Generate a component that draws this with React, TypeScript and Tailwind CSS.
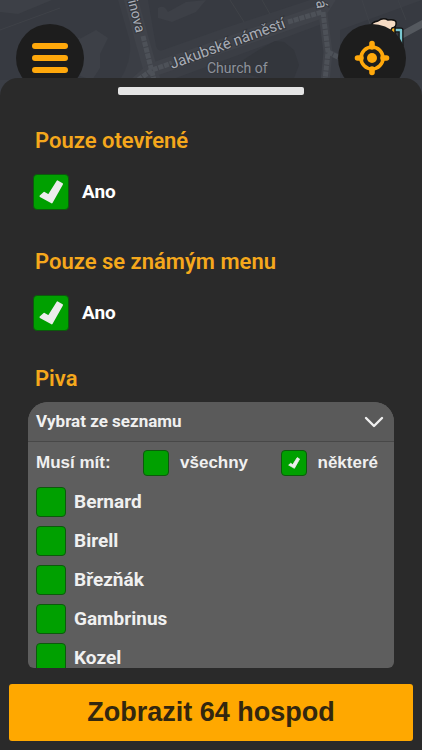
import React, { useState } from 'react';

const beers = ['Bernard', 'Birell', 'Březňák', 'Gambrinus', 'Kozel'];

type TickSize = 'sm' | 'md' | 'lg';

const boxSizes: Record<TickSize, string> = {
  sm: 'size-[26px]',
  md: 'size-[30px]',
  lg: 'size-9',
};

const tickSizes: Record<TickSize, string> = {
  sm: 'size-[18px]',
  md: 'size-[30px]',
  lg: 'size-9',
};

interface TickProps {
  label: string;
  checked: boolean;
  onChange: () => void;
  size: TickSize;
  type?: 'checkbox' | 'radio';
  name?: string;
  className?: string;
}

const Tick: React.FC<TickProps> = ({ label, checked, onChange, size, type = 'checkbox', name, className = '' }) => (
  <label className={`flex w-fit cursor-pointer items-center ${className}`}>
    <span className="grid shrink-0 place-items-center">
      <input
        type={type}
        name={name}
        checked={checked}
        onChange={onChange}
        className={`col-start-1 row-start-1 cursor-pointer appearance-none rounded border border-[#0c5a0c] bg-[#00a000] ${boxSizes[size]}`}
      />
      {checked && (
        <svg viewBox="0 0 36 36" className={`pointer-events-none col-start-1 row-start-1 ${tickSizes[size]}`} aria-hidden="true">
          <path
            d="M7.3 22.2 L11.2 18.6 L15.6 21.2 L24.4 7.2 L29.2 10 L18.8 28.6 Z"
            fill="#ececec"
            stroke="#ececec"
            strokeWidth="1.6"
            strokeLinejoin="round"
          />
        </svg>
      )}
    </span>
    {label}
  </label>
);

const StreetMap: React.FC = () => (
  <svg
    viewBox="0 0 422 112"
    preserveAspectRatio="xMidYMin slice"
    className="absolute inset-x-0 top-0 h-28 w-full bg-[#3b3e45]"
    aria-hidden="true"
  >
    {/* Blocks */}
    <g fill="#373a41">
      <path d="M0 0 H118 L130 42 Q132 60 120 80 H0 Z" />
      <path d="M148 0 H310 L225 28 L163 50 Q158 52 156 46 Z" />
      <path d="M176 78 L322 24 L326 80 Z" />
      <path d="M340 30 L422 0 V80 H340 Z" />
    </g>
    <g fill="#3d4047">
      <path d="M74 42 L96 30 L108 38 L100 54 L100 68 L92 80 L80 76 L84 56 Z" />
      <path d="M158 8 Q164 4 168 12 L186 2 L206 0 L196 12 L172 22 L158 18 Z" />
      <path d="M0 0 L52 0 L18 14 L0 12 Z" />
    </g>
    <path d="M262 48 L275 41 L284 42 L294 50 L299 65 L294 78 L262 78 L246 74 L240 62 Z" fill="#33363c" />
    <g stroke="#3f4248" strokeWidth="1" fill="none">
      <path d="M0 30 L60 8 M20 60 L80 38 M230 0 L244 22 M262 0 L270 14" />
      <path d="M362 0 L370 24 M398 0 L406 20" />
    </g>
    {/* Streets */}
    <g fill="none" stroke="#40434a" strokeLinecap="round" strokeLinejoin="round">
      <path d="M130 -4 L142 40 L154 82" strokeWidth="14" />
      <path d="M136 84 L152 70 L320 12 L330 -4" strokeWidth="14" />
      <path d="M323 14 L328 52 L325 82" strokeWidth="9" />
      <path d="M328 52 L345 60" strokeWidth="6" />
    </g>
    <path d="M400 36 L424 23" stroke="#55595f" strokeWidth="7" />
    <g fill="none" stroke="#4d5158" strokeWidth="5" strokeDasharray="5 1">
      <path d="M143 36 L154 80" />
      <path d="M138 80 L152 70 L172 63" />
      <path d="M288 22 L322 12" />
      <path d="M323 12 L328 52 L325 80" />
      <path d="M328 52 L340 58" />
    </g>
    {/* Street names */}
    <g fontFamily="Roboto, sans-serif" fill="#a9adb6" stroke="#33363c" strokeWidth="2" paintOrder="stroke">
      <text transform="translate(128 1) rotate(76)" fontSize="14">inova</text>
      <text transform="translate(172 69) rotate(-20)" fontSize="15">Jakubské náměstí</text>
      <text transform="translate(316 1) rotate(82)" fontSize="15">á</text>
      <text x="207" y="73" fontSize="14" fill="#8e929b">Church of</text>
    </g>
    {/* Pub marker */}
    <g stroke="#111" strokeLinejoin="round">
      <path d="M395 30 H401 V46" fill="none" strokeWidth="5" />
      <path d="M395 30 H401 V46" fill="none" stroke="#79c7d0" strokeWidth="2.4" />
      <path d="M376 26 H395 V50 H376 Z" fill="#f5b120" strokeWidth="1.5" />
      <path d="M371 27 Q371 22 378 21 Q383 17 388 20 Q395 19 396 22 Q397 27 392 28 L390 32 L371 32 Z" fill="#f6dcc4" strokeWidth="1.5" />
    </g>
  </svg>
);

const MenuIcon: React.FC = () => (
  <svg viewBox="0 0 36 30" className="h-[30px] w-9" fill="none" stroke="#ffa80b" strokeWidth="6" strokeLinecap="round" aria-hidden="true">
    <path d="M3 3 H33 M3 15 H33 M3 27 H33" />
  </svg>
);

const LocateIcon: React.FC = () => (
  <svg viewBox="0 0 36 36" className="size-9" fill="none" stroke="#ffa80b" aria-hidden="true">
    <circle cx="18" cy="18" r="11" strokeWidth="3.6" />
    <circle cx="18" cy="18" r="5" fill="#ffa80b" stroke="none" />
    <path d="M18 3.5 V7 M18 29 V32.5 M3.5 18 H7 M29 18 H32.5" strokeWidth="5.6" strokeLinecap="round" />
  </svg>
);

const App: React.FC = () => {
  const [onlyOpen, setOnlyOpen] = useState(true);
  const [onlyKnownMenu, setOnlyKnownMenu] = useState(true);
  const [listOpen, setListOpen] = useState(true);
  const [match, setMatch] = useState<'all' | 'some'>('some');
  const [selected, setSelected] = useState<string[]>([]);

  const toggleBeer = (beer: string) =>
    setSelected(prev => (prev.includes(beer) ? prev.filter(b => b !== beer) : [...prev, beer]));

  const heading = 'pl-[7px] text-[22px] leading-7 font-semibold text-[#f5a81c]';

  return (
    <div className="relative flex h-screen flex-col overflow-hidden bg-[#2a2a2a] font-['Roboto',sans-serif] text-[#f0f0f0]">
      <StreetMap />

      <header className="relative flex h-[78px] shrink-0 items-start justify-between px-4 pt-6">
        <button aria-label="Menu" className="grid size-[68px] shrink-0 place-items-center rounded-full bg-[#1d1d1d]">
          <MenuIcon />
        </button>
        <button aria-label="Moje poloha" className="grid size-[68px] shrink-0 place-items-center rounded-full bg-[#1d1d1d]">
          <LocateIcon />
        </button>
      </header>

      {/* Filter sheet */}
      <main className="relative flex min-h-0 flex-1 flex-col rounded-t-[18px] bg-[#2a2a2a] pt-[9px] pb-[9px]">
        <button aria-label="Zavřít filtr" className="h-2 w-[186px] shrink-0 self-center rounded-xs bg-[#e4e4e4]" />

        <div className="flex min-h-0 flex-1 flex-col px-7 pt-8">
          <section className="mb-[38px]">
            <h2 className={heading}>Pouze otevřené</h2>
            <Tick
              size="lg"
              label="Ano"
              checked={onlyOpen}
              onChange={() => setOnlyOpen(!onlyOpen)}
              className="mt-[19px] ml-[5px] gap-[13px] text-[19px] leading-7 font-bold text-white"
            />
          </section>

          <section className="mb-[34px]">
            <h2 className={heading}>Pouze se známým menu</h2>
            <Tick
              size="lg"
              label="Ano"
              checked={onlyKnownMenu}
              onChange={() => setOnlyKnownMenu(!onlyKnownMenu)}
              className="mt-[19px] ml-[5px] gap-[13px] text-[19px] leading-7 font-bold text-white"
            />
          </section>

          <section className="flex min-h-0 flex-1 flex-col">
            <h2 className={heading}>Piva</h2>
            <div className="mt-[9px] flex min-h-0 flex-1 flex-col overflow-hidden rounded-t-[20px] rounded-b-md bg-[#5e5e5e]">
              <button
                aria-expanded={listOpen}
                onClick={() => setListOpen(!listOpen)}
                className="flex h-10 shrink-0 items-center justify-between border-b border-[#484848] bg-[#5a5a5a] pr-[10px] pl-2 text-[17px] font-bold"
              >
                Vybrat ze seznamu
                <svg viewBox="0 0 20 12" className="h-3 w-5" fill="none" stroke="#f0f0f0" strokeWidth="2.4" strokeLinecap="round" strokeLinejoin="round" aria-hidden="true">
                  <path d="M2 2 L10 10 L18 2" />
                </svg>
              </button>

              {listOpen && (
                <>
                  <fieldset className="flex shrink-0 items-center justify-between pt-2 pr-4 pb-[11px] pl-2 font-['Liberation_Sans',sans-serif] text-[17px] leading-[26px] font-bold">
                    <span>Musí mít:</span>
                    <Tick type="radio" name="match" size="sm" label="všechny" checked={match === 'all'} onChange={() => setMatch('all')} className="gap-[11px]" />
                    <Tick type="radio" name="match" size="sm" label="některé" checked={match === 'some'} onChange={() => setMatch('some')} className="gap-[11px]" />
                  </fieldset>
                  <ul className="flex min-h-0 flex-col gap-[9px] overflow-hidden pl-2">
                    {beers.map(beer => (
                      <li key={beer} className="shrink-0">
                        <Tick
                          size="md"
                          label={beer}
                          checked={selected.includes(beer)}
                          onChange={() => toggleBeer(beer)}
                          className="gap-2 text-[19px] leading-7 font-bold"
                        />
                      </li>
                    ))}
                  </ul>
                </>
              )}
            </div>
          </section>
        </div>

        <button className="mx-[9px] mt-4 h-[57px] shrink-0 rounded-[3px] bg-[#ffa800] font-['Liberation_Sans',sans-serif] text-[27px] font-bold text-[#33270f]">
          Zobrazit 64 hospod
        </button>
      </main>
    </div>
  );
};

export default App;
